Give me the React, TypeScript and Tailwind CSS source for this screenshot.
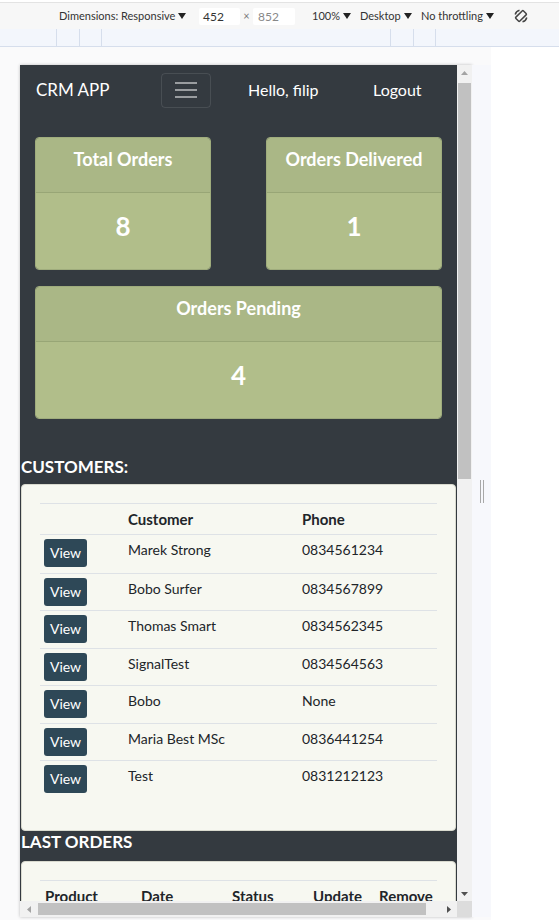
import React from "react";

const customers = [
  ["Marek Strong", "0834561234"],
  ["Bobo Surfer", "0834567899"],
  ["Thomas Smart", "0834562345"],
  ["SignalTest", "0834564563"],
  ["Bobo", "None"],
  ["Maria Best MSc", "0836441254"],
  ["Test", "0831212123"],
];

const Caret = () => (
  <svg width="8" height="6" viewBox="0 0 8 6" className="ml-[3px] inline-block shrink-0">
    <path d="M0 0 H8 L4 6 Z" fill="#222" />
  </svg>
);

const RotateIcon = () => (
  <svg width="16" height="16" viewBox="0 0 16 16" fill="none" stroke="#444" strokeWidth="1.5">
    <rect x="5.2" y="2.6" width="5.6" height="10.8" rx="1" transform="rotate(45 8 8)" />
    <path d="M2.2 6.5 A6 6 0 0 1 6.5 2.2" />
    <path d="M13.8 9.5 A6 6 0 0 1 9.5 13.8" />
  </svg>
);

const StatCard = ({ title, value, className = "" }: { title: string; value: string; className?: string }) => (
  <div className={`rounded-[4px] border border-[#9fac7d] overflow-hidden ${className}`}>
    <div className="h-[55px] bg-[#aab786] border-b border-[#98a676] pt-[9px] text-center text-[18px] font-bold leading-[24px] text-white">
      {title}
    </div>
    <div className="h-[76px] bg-[#b1be8a] pt-[18px] text-center text-[26px] font-bold leading-[31px] text-white">
      {value}
    </div>
  </div>
);

const Toolbar = () => (
  <div className="h-[27px] bg-[#f7f7f7] border-t border-[#e3e3e3] mt-[2px] flex items-center whitespace-nowrap text-[11px] text-[#333] font-['Lato',sans-serif]">
    <span className="ml-[59px] w-[140px] flex items-center shrink-0">
      Dimensions: Responsive
      <Caret />
    </span>
    <span className="w-[41px] h-[17px] shrink-0 bg-white rounded-[2px] pl-[4px] leading-[17px] text-[12px]">452</span>
    <span className="w-[13px] text-center text-[#777]">×</span>
    <span className="w-[42px] h-[17px] shrink-0 bg-white rounded-[2px] pl-[5px] leading-[17px] text-[12px] text-[#888]">852</span>
    <span className="ml-[17px] w-[48px] flex items-center shrink-0">
      100%
      <Caret />
    </span>
    <span className="w-[61px] flex items-center shrink-0">
      Desktop
      <Caret />
    </span>
    <span className="w-[92px] flex items-center shrink-0">
      No throttling
      <Caret />
    </span>
    <span className="flex items-center shrink-0">
      <RotateIcon />
    </span>
  </div>
);

const Ruler = () => (
  <div className="h-[18px] bg-[#f3f6fc] border-b border-[#d6deec] flex">
    <div className="w-[56px]" />
    <div className="w-[23px] border-l border-[#d6deec]" />
    <div className="w-[22px] border-l border-[#d6deec]" />
    <div className="w-[289px] border-l border-[#d6deec]" />
    <div className="w-[23px] border-l border-[#d6deec]" />
    <div className="w-[22px] border-l border-[#d6deec]" />
    <div className="flex-1 border-l border-[#d6deec]" />
  </div>
);

const Page = () => (
  <div className="w-[437px] h-[836px] overflow-hidden bg-[#343a40] font-['Lato',sans-serif] text-[#212529]">
    {/* navbar */}
    <div className="flex h-[54px] pl-[16px] pb-[4px] items-center">
      <div className="w-[125px] text-[17px] text-white">CRM APP</div>
      <div className="w-[50px] h-[35px] rounded-[4px] border border-white/10 flex flex-col items-center justify-center gap-[5px]">
        <span className="block w-[22px] h-[2px] bg-white/50" />
        <span className="block w-[22px] h-[2px] bg-white/50" />
        <span className="block w-[22px] h-[2px] bg-white/50" />
      </div>
      <div className="ml-[37px] w-[125px] text-[16px] text-white">Hello, filip</div>
      <div className="text-[16px] text-white">Logout</div>
    </div>

    {/* stats */}
    <div className="grid grid-cols-2 gap-x-[55px] gap-y-[16px] px-[15px] pt-[18px]">
      <StatCard title="Total Orders" value="8" />
      <StatCard title="Orders Delivered" value="1" />
      <StatCard title="Orders Pending" value="4" className="col-span-2" />
    </div>

    {/* customers */}
    <div className="mt-[36px] h-[24px] pl-px text-[17px] font-bold leading-[24px] text-white">CUSTOMERS:</div>
    <div className="mx-px mt-[5px] rounded-[4px] border border-[#d9dacf] bg-[#f7f8f1] px-[18px] pt-[18px] pb-[32px]">
      <div className="flex h-[32px] border-t border-b border-[#dee2e6] text-[15px] font-bold leading-[24px]">
        <div className="w-[84px]" />
        <div className="w-[174px] pl-[4px] pt-[3px]">Customer</div>
        <div className="pl-[4px] pt-[3px]">Phone</div>
      </div>
      {customers.map(([name, phone], i) => (
        <div key={name} className={`flex h-[37.5px] ${i > 0 ? "border-t" : ""} border-[#dee2e6] text-[14px] leading-[24px]`}>
          <div className="w-[84px] pl-[4px] pt-[4px]">
            <button className="w-[43px] h-[28px] rounded-[3px] bg-[#2e4857] text-[14px] text-white">View</button>
          </div>
          <div className="w-[174px] pl-[4px] pt-[3px]">{name}</div>
          <div className="pl-[4px] pt-[3px]">{phone}</div>
        </div>
      ))}
    </div>

    {/* orders */}
    <div className="h-[22px] pl-px text-[17px] font-bold leading-[22px] text-white">LAST ORDERS</div>
    <div className="mx-px mt-[8px] rounded-[4px] border border-[#d9dacf] bg-[#f7f8f1] px-[18px] pt-[18px] pb-[32px]">
      <div className="flex h-[40px] border-t border-[#dee2e6] text-[15px] font-bold leading-[24px]">
        <div className="w-[97px] pl-[5px] pt-[3px]">Product</div>
        <div className="w-[91px] pl-[4px] pt-[3px]">Date</div>
        <div className="w-[81px] pl-[4px] pt-[3px]">Status</div>
        <div className="w-[66px] pl-[4px] pt-[3px]">Update</div>
        <div className="pl-[4px] pt-[3px] whitespace-nowrap">Remove</div>
      </div>
    </div>
  </div>
);

const Viewport = () => (
  <div className="w-[452px] h-[852px] flex flex-col shadow-[0_0_3px_rgba(0,0,0,0.25)]">
    <div className="flex h-[836px]">
      <Page />
      {/* vertical scrollbar */}
      <div className="w-[15px] bg-[#f1f1f1] flex flex-col items-center">
        <div className="h-[15px] flex items-center justify-center">
          <svg width="7" height="4" viewBox="0 0 7 4"><path d="M0 4 L3.5 0 L7 4 Z" fill="#a3a3a3" /></svg>
        </div>
        <div className="mt-[3px] w-[13px] h-[396px] bg-[#c1c1c1]" />
        <div className="flex-1" />
        <div className="h-[15px] flex items-center justify-center">
          <svg width="7" height="4" viewBox="0 0 7 4"><path d="M0 0 L3.5 4 L7 0 Z" fill="#505050" /></svg>
        </div>
      </div>
    </div>
    <div className="flex h-[16px]">
      {/* horizontal scrollbar */}
      <div className="w-[437px] bg-[#f1f1f1] flex items-center">
        <div className="w-[17px] flex items-center justify-center">
          <svg width="4" height="7" viewBox="0 0 4 7"><path d="M4 0 L0 3.5 L4 7 Z" fill="#a3a3a3" /></svg>
        </div>
        <div className="ml-px w-[388px] h-[12px] bg-[#c1c1c1]" />
        <div className="flex-1 flex items-center justify-end pr-[6px]">
          <svg width="4" height="7" viewBox="0 0 4 7"><path d="M0 0 L4 3.5 L0 7 Z" fill="#505050" /></svg>
        </div>
      </div>
      <div className="w-[15px] bg-[#dcdcdc]" />
    </div>
  </div>
);

export default function App() {
  return (
    <div className="w-[559px] h-[920px] overflow-hidden bg-white">
      <Toolbar />
      <Ruler />
      <div className="flex">
        <div className="w-[491px] h-[875px] bg-[#fafafb] pl-[20px] pt-[18px] flex">
          <Viewport />
          <div className="w-[19px] h-[852px] bg-[#f7f8fc] flex items-center justify-center gap-[2px]">
            <span className="block w-px h-[23px] bg-[#a8a8a8]" />
            <span className="block w-px h-[23px] bg-[#a8a8a8]" />
          </div>
        </div>
        <div className="flex-1 bg-white" />
      </div>
    </div>
  );
}
